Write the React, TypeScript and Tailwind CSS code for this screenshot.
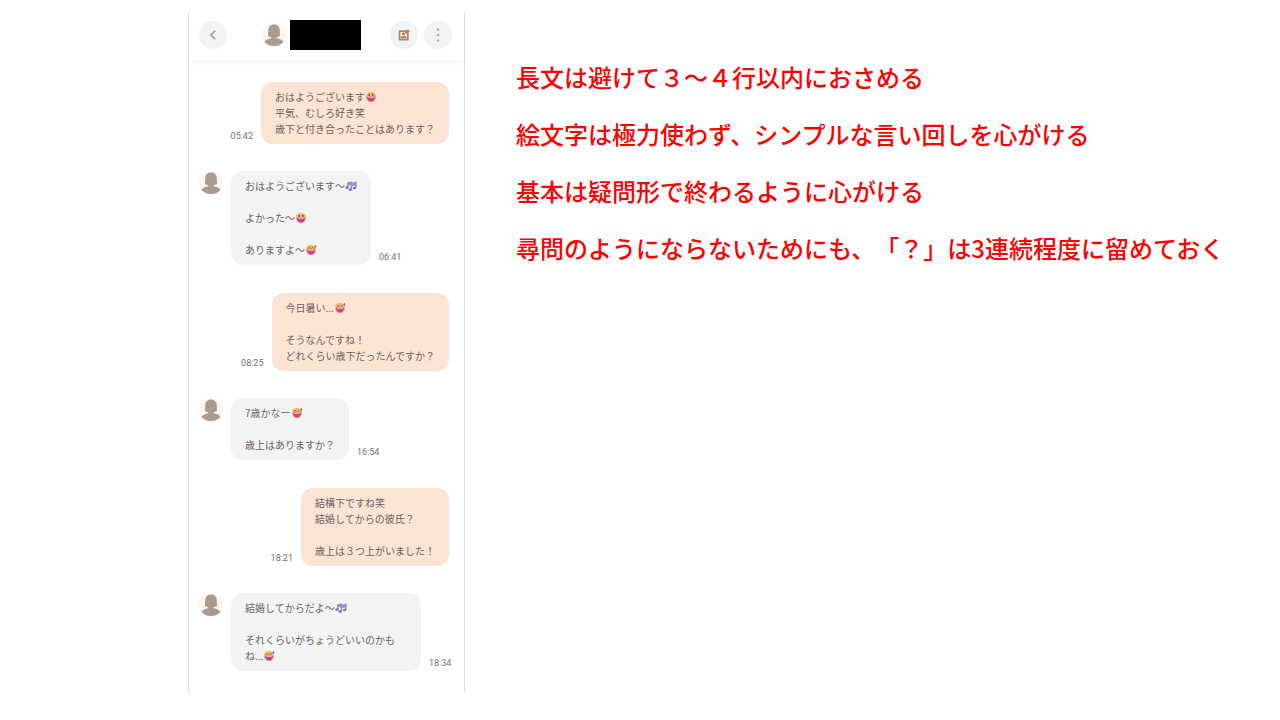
import React from 'react';

type EmojiName = 'grin' | 'sweat' | 'notes';
type Line = { text: string; emoji?: EmojiName };
type Message = { id: number; mine: boolean; time: string; wide?: boolean; lines: Line[] };

const messages: Message[] = [
  {
    id: 1, mine: true, time: '05:42',
    lines: [
      { text: 'おはようございます', emoji: 'grin' },
      { text: '平気、むしろ好き笑' },
      { text: '歳下と付き合ったことはあります？' },
    ],
  },
  {
    id: 2, mine: false, time: '06:41',
    lines: [
      { text: 'おはようございます〜', emoji: 'notes' },
      { text: '' },
      { text: 'よかった〜', emoji: 'grin' },
      { text: '' },
      { text: 'ありますよ〜', emoji: 'sweat' },
    ],
  },
  {
    id: 3, mine: true, time: '08:25',
    lines: [
      { text: '今日暑い...', emoji: 'sweat' },
      { text: '' },
      { text: 'そうなんですね！' },
      { text: 'どれくらい歳下だったんですか？' },
    ],
  },
  {
    id: 4, mine: false, time: '16:54',
    lines: [
      { text: '7歳かなー', emoji: 'sweat' },
      { text: '' },
      { text: '歳上はありますか？' },
    ],
  },
  {
    id: 5, mine: true, time: '18:21',
    lines: [
      { text: '結構下ですね笑' },
      { text: '結婚してからの彼氏？' },
      { text: '' },
      { text: '歳上は３つ上がいました！' },
    ],
  },
  {
    id: 6, mine: false, time: '18:34', wide: true,
    lines: [
      { text: '結婚してからだよ〜', emoji: 'notes' },
      { text: '' },
      { text: 'それくらいがちょうどいいのかも' },
      { text: 'ね...', emoji: 'sweat' },
    ],
  },
];

const tips = [
  '長文は避けて３～４行以内におさめる',
  '絵文字は極力使わず、シンプルな言い回しを心がける',
  '基本は疑問形で終わるように心がける',
  '尋問のようにならないためにも、「？」は3連続程度に留めておく',
];

function Emoji({ name }: { name: EmojiName }) {
  if (name === 'notes') {
    return (
      <svg viewBox="0 0 12 12" className="w-3 h-3 shrink-0" role="img" aria-label="音符">
        <g fill="none" stroke="#9a8cc6" strokeWidth="1.6">
          <path d="M2.8 7.6V3.2L6.6 2.2v4.4M2.8 4.6l3.8-1" />
          <path d="M6.4 9.6V4l4.4-1.6v5.4M6.4 5.8l4.4-1.6" />
        </g>
        <g fill="#8576b8">
          <ellipse cx="2" cy="7.6" rx="1.7" ry="1.3" />
          <ellipse cx="5.2" cy="9.6" rx="1.8" ry="1.4" />
          <ellipse cx="9.6" cy="8" rx="1.7" ry="1.3" />
        </g>
      </svg>
    );
  }
  return (
    <svg viewBox="0 0 12 12" className="w-3 h-3 shrink-0" role="img" aria-label={name === 'grin' ? '笑顔' : '汗笑い'}>
      <circle cx="6" cy="6" r="5.2" fill="#f9b765" />
      <path d="M2 5.8h8c0 2.9-1.6 4.7-4 4.7S2 8.700 2 5.800z" fill="#c43fae" />
      <path d="M3.200 5.900h5.600v.9H3.200z" fill="#f3c3d8" />
      {name === 'grin' ? (
        <g fill="#6b4a3a">
          <ellipse cx="4.2" cy="3.900" rx=".8" ry="1.1" />
          <ellipse cx="7.8" cy="3.900" rx=".8" ry="1.1" />
        </g>
      ) : (
        <>
          <path d="M2.9 4.4l1.2-.9 1.2.9M6.4 4.4l1.2-.9 1.2.9" fill="none" stroke="#6b4a3a" strokeWidth=".8" />
          <path d="M10.4.8c.7 1 1 1.500 1 2a1 1 0 0 1-2 0c0-.5.3-1 1-2z" fill="#5b7fd6" />
        </>
      )}
    </svg>
  );
}

function Avatar() {
  return (
    <svg viewBox="0 0 24 24" className="w-6 h-6 shrink-0" role="img" aria-label="プロフィール画像">
      <circle cx="12" cy="12" r="12" fill="#fdf4ec" />
      <path d="M12 1.6c-3.7 0-5.7 2.4-5.8 6L6 12.6c0 .9 1 1.300 2.600 1.300h6.800c1.600 0 2.600-.4 2.600-1.300l-.2-5c-.1-3.600-2.100-6-5.800-6z" fill="#a99b8f" />
      <path d="M9.200 12.500h5.600v2.700c3 .5 5.300 1.500 6.700 3.500-2 2.700-5.500 4.300-9.500 4.300s-7.500-1.600-9.500-4.300c1.400-2 3.700-3 6.700-3.500z" fill="#a99b8f" />
    </svg>
  );
}

function Bubble({ message }: { message: Message }) {
  const { mine, time, wide, lines } = message;
  return (
    <li className={`flex last:mb-[22px] ${mine ? 'flex-row-reverse mr-[15px] mb-[27px]' : 'mb-7'}`}>
      {!mine && <div className="mr-2"><Avatar /></div>}
      <div className={`rounded-xl px-3.5 py-[7px] ${mine ? 'bg-[#fce4d4]' : 'bg-[#f3f3f3]'} ${wide ? 'w-[190px]' : ''}`}>
        {lines.map((line, i) => (
          <p key={i} className="flex items-center h-4 text-[10px] leading-[14px] text-[#6b625c] whitespace-nowrap">
            {line.text}
            {line.emoji && <Emoji name={line.emoji} />}
          </p>
        ))}
      </div>
      <time className="self-end px-2 pb-[2px] text-[9px] leading-3 text-[#6f7277] font-[Roboto,sans-serif]">{time}</time>
    </li>
  );
}

export default function App() {
  return (
    <main className="flex items-start min-h-screen bg-white pt-3 pl-[188px] pr-10 font-['Noto_Sans_CJK_JP',sans-serif] [text-spacing-trim:space-all]">
      {/* Chat */}
      <section className="w-[277px] shrink-0 border-x border-[#dcdfe1]">
        <header className="flex items-center justify-between h-12 pl-2.5 pr-3 pb-0.5 shadow-[0_3px_5px_rgba(0,0,0,0.03)]">
          <button aria-label="戻る" className="w-7 h-7 rounded-full bg-[#f3f3f3] flex items-center justify-center">
            <svg viewBox="0 0 12 12" className="w-3 h-3" fill="none" stroke="#999" strokeWidth="1.5">
              <path d="M8.200 1.800L4 6l4.200 4.200" />
            </svg>
          </button>
          <div className="flex items-center gap-1 pl-1.5">
            <Avatar />
            <div className="w-[71px] h-[30px] bg-black" />
          </div>
          <div className="flex gap-1.5">
            <button aria-label="メモ" className="w-7 h-7 rounded-full bg-[#f3f3f3] flex items-center justify-center">
              <svg viewBox="0 0 12 12" className="w-3 h-3">
                <path d="M1.600 2.100h8.200v8.600H1.600z" fill="#f8f4f0" stroke="#aa8463" strokeWidth="1.700" />
                <circle cx="5.500" cy="4.800" r="1.600" fill="#aa8463" />
                <path d="M2.500 9.200c.2-1.700 1.300-2.300 3.100-2.300s2.900.6 3.100 2.300z" fill="#aa8463" />
                <path d="M7.600 4.400l3.300-3.300" stroke="#aa8463" strokeWidth="2.600" />
              </svg>
            </button>
            <button aria-label="メニュー" className="w-7 h-7 rounded-full bg-[#f3f3f3] flex items-center justify-center">
              <svg viewBox="0 0 4 16" className="w-1 h-4" fill="#b3b3b3">
                <circle cx="2" cy="2.500" r="1.300" />
                <circle cx="2" cy="8" r="1.300" />
                <circle cx="2" cy="13.500" r="1.300" />
              </svg>
            </button>
          </div>
        </header>

        <ul className="pt-[22px] pl-2.5">
          {messages.map(m => <Bubble key={m.id} message={m} />)}
        </ul>
      </section>

      {/* Tips */}
      <ul className="flex-1 pt-9 pl-[51px] text-2xl leading-[57px] font-medium text-[#ff0000]">
        {tips.map(tip => <li key={tip}>{tip}</li>)}
      </ul>
    </main>
  );
}
